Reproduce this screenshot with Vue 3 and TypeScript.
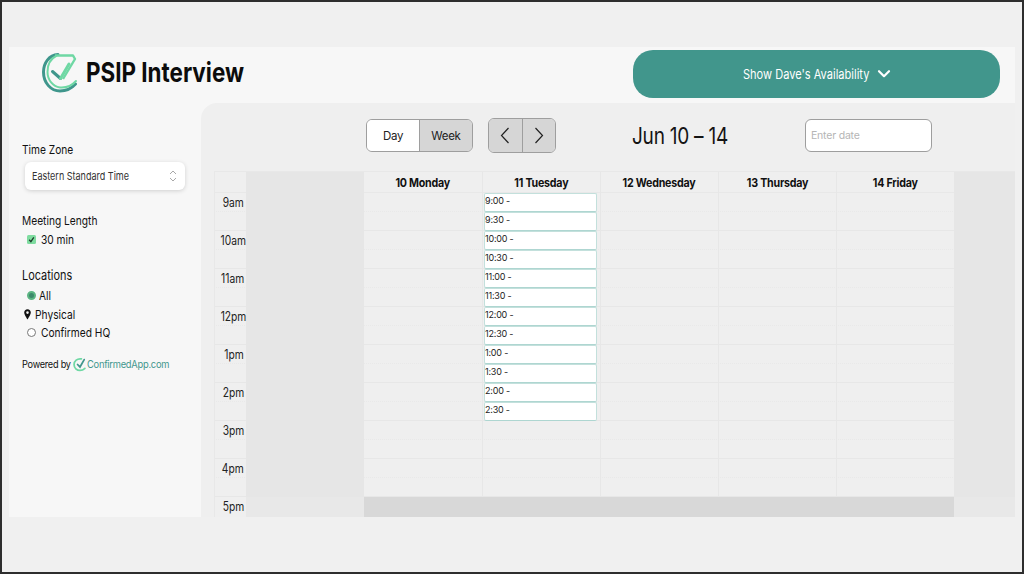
<script setup lang="ts">
const days: string[] = ['10 Monday', '11 Tuesday', '12 Wednesday', '13 Thursday', '14 Friday']

interface Row {
  label: string
  half: boolean
  slot: string
}

const labels: string[] = ['9am', '10am', '11am', '12pm', '1pm', '2pm', '3pm', '4pm']
const hours: number[] = [9, 10, 11, 12, 1, 2]
const rows: Row[] = labels.flatMap((label, i) => {
  const h = hours[i]
  return [
    { label, half: false, slot: h ? `${h}:00 -` : '' },
    { label: '', half: true, slot: h ? `${h}:30 -` : '' },
  ]
})
</script>

<template>
  <div class="frame">
    <div class="app">
      <header class="top">
        <div class="brand">
          <svg class="logo" viewBox="0 0 36 40" fill="none">
            <path d="M16 1.5C7 2 1.5 10 1.5 19C1.5 30 9 38 18 38C24 38 29 36 33.5 31" stroke="#3f968c" stroke-width="3" stroke-linecap="round" />
            <path d="M13 2.5H31L33 6L21 26" stroke="#6fd8a4" stroke-width="2.4" stroke-linejoin="round" />
            <path d="M14 3C8 6 5.5 12 5.5 19C5.5 27 11 33.5 18 34.5C24 35 29.5 33 34 28" stroke="#6fd8a4" stroke-width="2" stroke-linecap="round" />
            <path d="M10.5 18.5L18.5 25.5" stroke="#3f968c" stroke-width="3" stroke-linecap="round" />
            <path d="M18.5 25.5L27 11" stroke="#6fd8a4" stroke-width="3" stroke-linecap="round" />
          </svg>
          <h1>PSIP Interview</h1>
        </div>
        <button class="avail">
          <span class="avail-text">Show Dave's Availability</span>
          <svg width="14" height="10" viewBox="0 0 14 10" fill="none">
            <path d="M2 2.2L7 7.2L12 2.2" stroke="#fff" stroke-width="2.2" stroke-linecap="round" stroke-linejoin="round" />
          </svg>
        </button>
      </header>

      <div class="body">
        <aside class="side">
          <div class="label sq">Time Zone</div>
          <div class="select">
            <span class="sq">Eastern Standard Time</span>
            <svg width="8" height="14" viewBox="0 0 8 14" fill="none">
              <path d="M1 5L4 2L7 5M1 9L4 12L7 9" stroke="#a8a8a8" stroke-width="1" />
            </svg>
          </div>

          <div class="label ml sq">Meeting Length</div>
          <div class="opt check-row">
            <span class="check">
              <svg width="9" height="9" viewBox="0 0 9 9" fill="none">
                <path d="M2.2 4.8L3.9 6.6L6.8 2.4" stroke="#1d3a2a" stroke-width="1.3" />
              </svg>
            </span>
            <span class="sq">30 min</span>
          </div>

          <div class="label loc sq">Locations</div>
          <div class="opt all">
            <span class="radio on"></span>
            <span class="sq">All</span>
          </div>
          <div class="opt phys">
            <svg width="7" height="11" viewBox="0 0 7 11">
              <path d="M3.5 0.3C1.6 0.3 0.2 1.7 0.2 3.6C0.2 5.8 3.5 10.5 3.5 10.5C3.5 10.5 6.8 5.8 6.8 3.6C6.8 1.7 5.4 0.3 3.5 0.3ZM3.5 4.9A1.3 1.3 0 1 1 3.5 2.3A1.3 1.3 0 0 1 3.5 4.9Z" fill="#111" />
            </svg>
            <span class="sq">Physical</span>
          </div>
          <div class="opt hq">
            <span class="radio"></span>
            <span class="sq">Confirmed HQ</span>
          </div>

          <div class="powered">
            <span class="by">Powered by</span>
            <svg width="14" height="15" viewBox="0 0 40 40" fill="none">
              <path d="M24 4C12 2 3 10 3 20C3 30 11 37 20 37C26 37 30 35 34 31" stroke="#6fd8a4" stroke-width="5" stroke-linecap="round" />
              <path d="M13 20L20 27L32 6" stroke="#3f968c" stroke-width="5" stroke-linecap="round" />
            </svg>
            <span class="brandlink">ConfirmedApp.com</span>
          </div>
        </aside>

        <main class="main">
          <div class="toolbar">
            <div class="seg">
              <button class="seg-btn active">Day</button>
              <button class="seg-btn">Week</button>
            </div>
            <div class="nav">
              <button class="nav-btn" aria-label="Previous">
                <svg width="10" height="17" viewBox="0 0 10 17" fill="none"><path d="M8.5 1L1.5 8.5L8.5 16" stroke="#222" stroke-width="1.2" /></svg>
              </button>
              <button class="nav-btn" aria-label="Next">
                <svg width="10" height="17" viewBox="0 0 10 17" fill="none"><path d="M1.5 1L8.5 8.5L1.5 16" stroke="#222" stroke-width="1.2" /></svg>
              </button>
            </div>
            <div class="range">Jun 10 – 14</div>
            <input class="date" placeholder="Enter date" />
          </div>

          <div class="cal">
            <div class="row head">
              <div class="time"></div>
              <div class="gutter"></div>
              <div v-for="d in days" :key="d" class="cell day-name"><span>{{ d }}</span></div>
              <div class="gutter last"></div>
            </div>
            <div v-for="(r, i) in rows" :key="i" class="row" :class="{ half: r.half }">
              <div class="time"><span>{{ r.label }}</span></div>
              <div class="gutter"></div>
              <div v-for="(d, j) in days" :key="d" class="cell">
                <div v-if="j === 1 && r.slot" class="slot">{{ r.slot }}</div>
              </div>
              <div class="gutter last"></div>
            </div>
            <div class="row close">
              <div class="time"><span>5pm</span></div>
              <div class="gutter"></div>
              <div class="closed"></div>
              <div class="gutter last"></div>
            </div>
          </div>
        </main>
      </div>
    </div>
  </div>
</template>

<style>
html,
body {
  margin: 0;
  background: #fff;
}
</style>

<style scoped>
.frame {
  box-sizing: border-box;
  width: 1024px;
  height: 574px;
  border: 2px solid #2e2e2e;
  background: #f0f0f0;
  padding: 45px 7px 55px;
  font-family: Inter, 'Liberation Sans', sans-serif;
  color: #111;
  overflow: hidden;
}
.app {
  height: 100%;
  display: flex;
  flex-direction: column;
  background: #f7f7f7;
}
.top {
  height: 56px;
  flex: none;
  display: flex;
  align-items: center;
  justify-content: space-between;
  padding: 0 15px 2px 33px;
  box-sizing: border-box;
}
.brand {
  display: flex;
  align-items: center;
  gap: 8px;
  margin-top: -3px;
}
.logo {
  width: 36px;
  height: 40px;
}
h1 {
  margin: 0;
  font-size: 27px;
  font-weight: 700;
  color: #0c0c0c;
  white-space: nowrap;
  transform: scaleX(0.83);
  transform-origin: left center;
}
.avail {
  width: 367px;
  height: 48px;
  border: 0;
  border-radius: 20px;
  background: #41968c;
  color: #fff;
  font: 400 13px Inter, 'Liberation Sans', sans-serif;
  display: flex;
  align-items: center;
  justify-content: center;
  gap: 9px;
}
.avail-text {
  width: 125px;
  white-space: nowrap;
  text-align: left;
  transform: scaleX(0.85);
  transform-origin: left center;
}
.body {
  flex: 1;
  display: flex;
  min-height: 0;
}
.side {
  width: 192px;
  flex: none;
  box-sizing: border-box;
  padding: 39px 0 0 13px;
  font-size: 12px;
}
.sq {
  display: block;
  white-space: nowrap;
  transform: scaleX(0.85);
  transform-origin: left center;
}
.label {
  line-height: 16px;
}
.select {
  box-sizing: border-box;
  width: 160px;
  height: 28px;
  margin: 4px 0 0 3px;
  padding: 0 8px 0 7px;
  background: #fff;
  border-radius: 6px;
  box-shadow: 0 1px 4px rgba(0, 0, 0, 0.16);
  display: flex;
  align-items: center;
  justify-content: space-between;
  font-size: 11px;
  color: #333;
}
.select .sq {
  transform: scaleX(0.82);
}
.ml {
  margin-top: 23px;
}
.opt {
  display: flex;
  align-items: center;
  height: 18px;
}
.check-row {
  margin-top: 1px;
  padding-left: 5px;
  gap: 5px;
}
.check {
  width: 9px;
  height: 9px;
  background: #7fdca0;
  border-radius: 1.5px;
  display: flex;
}
.loc {
  margin-top: 19px;
  font-size: 13.5px;
  transform: scaleX(0.81);
}
.all {
  margin-top: 3px;
  padding-left: 5px;
  gap: 3px;
}
.phys {
  margin-top: 1px;
  padding-left: 2px;
  gap: 4px;
}
.hq {
  margin-top: 0;
  padding-left: 5px;
  gap: 5px;
}
.radio {
  box-sizing: border-box;
  width: 9px;
  height: 9px;
  border-radius: 50%;
  border: 1px solid #777;
  background: #fff;
}
.radio.on {
  border: 2px solid #5cb583;
  background: #3e8a6c;
}
.powered {
  margin-top: 15px;
  display: flex;
  align-items: center;
  font-size: 10.5px;
  height: 16px;
}
.by {
  width: 51px;
  flex: none;
  white-space: nowrap;
  letter-spacing: -0.3px;
  transform: scaleX(0.875);
  transform-origin: left center;
}
.brandlink {
  color: #41968c;
  white-space: nowrap;
  letter-spacing: -0.3px;
  transform: scaleX(0.89);
  transform-origin: left center;
}
.main {
  flex: 1;
  min-width: 0;
  background: #efefef;
  border-top-left-radius: 16px;
  padding: 15px 0 0 13px;
  box-sizing: border-box;
  display: flex;
  flex-direction: column;
}
.toolbar {
  height: 35px;
  display: flex;
  align-items: center;
  padding-left: 152px;
  margin-bottom: 18px;
}
.seg,
.nav {
  display: flex;
  box-sizing: border-box;
  border: 1px solid #9e9e9e;
  border-radius: 6px;
  overflow: hidden;
}
.seg {
  width: 107px;
  height: 33px;
}
.nav {
  width: 68px;
  height: 35px;
  margin-left: 15px;
}
.seg-btn,
.nav-btn {
  flex: 1;
  border: 0;
  padding: 0;
  background: #d6d6d6;
  color: #222;
  font: 400 11.5px Inter, 'Liberation Sans', sans-serif;
  letter-spacing: -0.3px;
  display: flex;
  align-items: center;
  justify-content: center;
}
.seg-btn.active {
  background: #fff;
  border-right: 1px solid #9e9e9e;
}
.nav-btn + .nav-btn {
  border-left: 1px solid #9e9e9e;
}
.range {
  margin-left: 76px;
  width: 173px;
  font-size: 23.5px;
  letter-spacing: -0.3px;
  color: #141414;
  line-height: 30px;
  white-space: nowrap;
  transform: scaleX(0.81);
  transform-origin: left center;
}
.date {
  box-sizing: border-box;
  width: 127px;
  height: 33px;
  border: 1px solid #9e9e9e;
  border-radius: 6px;
  background: #fff;
  padding: 0 5px;
  font: 400 10.5px Inter, 'Liberation Sans', sans-serif;
  letter-spacing: -0.2px;
  outline: none;
}
.date::placeholder {
  color: #b5b5b5;
}
.cal {
  display: flex;
  flex-direction: column;
}
.row {
  display: grid;
  grid-template-columns: 32px 118px repeat(5, 118px) 1fr;
  height: 19px;
  box-sizing: border-box;
  border-bottom: 1px dotted #e9e9e9;
}
.row.half {
  border-bottom: 1px solid #e7e7e7;
}
.row.head {
  height: 22px;
  border-top: 1px solid #e8e8e8;
  border-bottom: 1px solid #e8e8e8;
}
.row.close {
  height: 20px;
  border-bottom: 0;
  grid-template-columns: 32px 118px 590px 1fr;
}
.time {
  font-size: 12.5px;
  color: #222;
  text-align: right;
  padding-right: 2px;
  line-height: 19px;
  border-left: 1px solid #e8e8e8;
}
.time span {
  display: inline-block;
  transform: scaleX(0.82);
  transform-origin: right center;
}
.gutter {
  background: #e6e6e6;
}
.close .gutter {
  background: #e8e8e8;
}
.cell {
  min-width: 0;
}
.cell + .cell {
  border-left: 1px solid #e7e7e7;
}
.day-name {
  font-size: 12px;
  font-weight: 700;
  letter-spacing: -0.25px;
  text-align: center;
  line-height: 22px;
  color: #111;
}
.day-name span {
  display: inline-block;
  transform: scaleX(0.89);
}
.slot {
  box-sizing: border-box;
  height: 18.5px;
  margin: 0 3px 0 1px;
  background: #fff;
  border: 1px solid #c3e0dc;
  border-bottom-color: #aed6d1;
  border-radius: 2px;
  font-size: 9px;
  letter-spacing: -0.2px;
  line-height: 14px;
  color: #222;
  overflow: hidden;
}
.closed {
  background: #d8d8d8;
}
</style>
